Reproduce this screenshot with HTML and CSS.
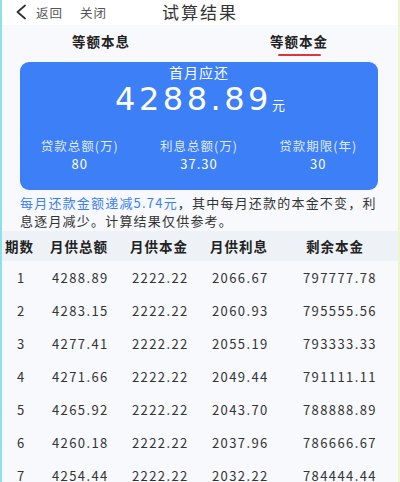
FILE: index.html
```html
<!DOCTYPE html>
<html lang="zh">
<head>
<meta charset="utf-8">
<link rel="stylesheet" href="styles.css">
</head>
<body>
<div class="page">
  <div class="nav">
    <div class="nav-left">
      <svg class="back" width="14" height="16" viewBox="0 0 14 16"><path d="M11 1.5 L3.5 8 L11 14.5" fill="none" stroke="#333" stroke-width="1.8" stroke-linecap="round" stroke-linejoin="round"/></svg>
      <span class="nav-link">返回</span>
      <span class="nav-link close">关闭</span>
    </div>
    <div class="nav-title">试算结果</div>
    <div></div>
  </div>
  <div class="tabs">
    <div class="tab"><span>等额本息</span></div>
    <div class="tab active"><span>等额本金</span></div>
  </div>
  <div class="card">
    <div class="card-label">首月应还</div>
    <div class="card-amount"><span class="big">4288.89</span><span class="unit">元</span></div>
    <div class="stats">
      <div class="stat"><div class="stat-label">贷款总额(万)</div><div class="stat-val">80</div></div>
      <div class="stat"><div class="stat-label">利息总额(万)</div><div class="stat-val">37.30</div></div>
      <div class="stat"><div class="stat-label">贷款期限(年)</div><div class="stat-val">30</div></div>
    </div>
  </div>
  <p class="note"><span class="hl">每月还款金额递减5.74元</span>，其中每月还款的本金不变，利息逐月减少。计算结果仅供参考。</p>
  <div class="table">
    <div class="row head">
      <span class="c1">期数</span><span class="c2">月供总额</span><span class="c3">月供本金</span><span class="c4">月供利息</span><span class="c5">剩余本金</span>
    </div>
    <div class="row"><span class="c1">1</span><span class="c2">4288.89</span><span class="c3">2222.22</span><span class="c4">2066.67</span><span class="c5">797777.78</span></div>
    <div class="row"><span class="c1">2</span><span class="c2">4283.15</span><span class="c3">2222.22</span><span class="c4">2060.93</span><span class="c5">795555.56</span></div>
    <div class="row"><span class="c1">3</span><span class="c2">4277.41</span><span class="c3">2222.22</span><span class="c4">2055.19</span><span class="c5">793333.33</span></div>
    <div class="row"><span class="c1">4</span><span class="c2">4271.66</span><span class="c3">2222.22</span><span class="c4">2049.44</span><span class="c5">791111.11</span></div>
    <div class="row"><span class="c1">5</span><span class="c2">4265.92</span><span class="c3">2222.22</span><span class="c4">2043.70</span><span class="c5">788888.89</span></div>
    <div class="row"><span class="c1">6</span><span class="c2">4260.18</span><span class="c3">2222.22</span><span class="c4">2037.96</span><span class="c5">786666.67</span></div>
    <div class="row"><span class="c1">7</span><span class="c2">4254.44</span><span class="c3">2222.22</span><span class="c4">2032.22</span><span class="c5">784444.44</span></div>
  </div>
</div>
</body>
</html>
```

FILE: styles.css
```css
* { box-sizing: border-box; }
html, body { margin: 0; padding: 0; }
body {
  width: 400px;
  height: 482px;
  overflow: hidden;
  background: #f7f9fc;
  font-family: "Noto Sans CJK SC", "Noto Sans", sans-serif;
  color: #222;
}
.page {
  height: 482px;
  border-left: 2px solid #8fe0e6;
  border-right: 2px solid #eef4cf;
  overflow: hidden;
}
.nav {
  height: 25px;
  background: #fff;
  display: grid;
  grid-template-columns: 1fr auto 1fr;
  align-items: center;
  padding-bottom: 1px;
}
.nav-left {
  display: flex;
  align-items: center;
  padding-left: 12px;
}
.back { margin-right: 8px; }
.nav-link {
  font-size: 12.5px;
  color: #555;
  letter-spacing: 1px;
}
.close { margin-left: 17px; }
.nav-title {
  font-size: 17px;
  color: #333;
  letter-spacing: 2px;
  line-height: 22px;
}
.tabs {
  display: flex;
  height: 32px;
}
.tab {
  flex: 1;
  display: flex;
  flex-direction: column;
  align-items: center;
  padding-top: 7px;
  font-size: 13.5px;
  font-weight: 700;
  color: #222;
  letter-spacing: 1px;
}
.tab span { line-height: 18px; }
.tab.active::after {
  content: "";
  display: block;
  width: 43px;
  height: 2px;
  margin-top: 4px;
  background: #d9363e;
  border-radius: 1px;
}
.card {
  margin: 5px 20px 0 18px;
  height: 128px;
  background: #3d7ff6;
  border-radius: 9px;
  color: #fff;
  display: flex;
  flex-direction: column;
  align-items: center;
  padding-top: 1px;
}
.card-label {
  font-size: 14px;
  line-height: 19px;
  letter-spacing: 1px;
}
.card-amount {
  display: flex;
  align-items: baseline;
  line-height: 34px;
  padding-left: 2px;
}
.big {
  font-family: "DejaVu Sans", sans-serif;
  font-size: 32px;
  letter-spacing: 3.5px;
}
.unit {
  font-size: 13px;
}
.stats {
  display: flex;
  width: 100%;
  margin-top: 15px;
}
.stat {
  flex: 1;
  text-align: center;
}
.stat-label {
  font-size: 12.5px;
  line-height: 18px;
  color: rgba(255,255,255,0.85);
  letter-spacing: 1px;
}
.stat-val {
  font-size: 13px;
  line-height: 18px;
  letter-spacing: 1px;
}
.note {
  margin: 4px 20px 0 18px;
  font-size: 13px;
  line-height: 18px;
  letter-spacing: 1.2px;
  color: #333;
}
.hl { color: #3d7ff6; }
.table { margin-top: 1px; }
.row {
  display: flex;
  align-items: center;
  height: 33px;
  font-size: 13px;
  color: #333;
  letter-spacing: 1.4px;
}
.row.head {
  height: 30px;
  background: #eef2f7;
  font-weight: 700;
  font-size: 13.5px;
  color: #222;
  letter-spacing: 1px;
}
.c1 { width: 48px; padding-left: 3px; }
.c2 { width: 80px; }
.c3 { width: 80px; }
.c4 { width: 96px; }
.c5 { flex: 1; }
.row:not(.head) .c1 { width: 50px; padding-left: 15px; }
.row:not(.head) .c4 { width: 91px; }
```
